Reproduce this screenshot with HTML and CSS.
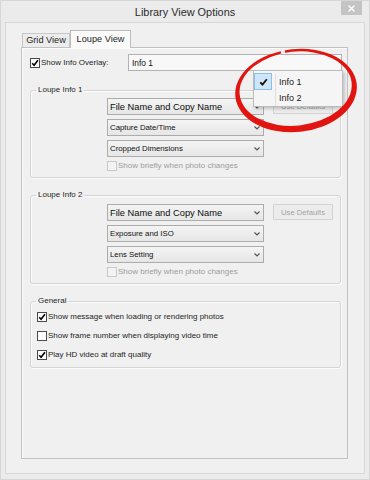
FILE: index.html
```html
<!DOCTYPE html>
<html>
<head>
<meta charset="utf-8">
<link rel="stylesheet" href="styles.css">
</head>
<body>
<div class="window">
  <div class="titlebar">
    <div class="title">Library View Options</div>
    <div class="close"><svg width="7" height="7" viewBox="0 0 7 7"><path d="M0.5 0.5L6.5 6.5M6.5 0.5L0.5 6.5" stroke="#fff" stroke-width="1.3"/></svg></div>
  </div>
  <div class="client">
    <div class="tabstrip">
      <div class="tab grid">Grid View</div>
      <div class="tab active">Loupe View</div>
    </div>
    <div class="panel">
      <div class="overlay-row">
        <div class="check"><span class="box on"><svg width="8" height="8" viewBox="0 0 8 8"><path d="M1.2 4.2L3.1 6.3L6.9 1.2" fill="none" stroke="#000" stroke-width="1.6"/></svg></span>Show Info Overlay:</div>
        <div class="select plain">Info 1</div>
      </div>

      <fieldset class="group g1">
        <legend>Loupe Info 1</legend>
        <div class="rows">
          <div class="select big"><span>File Name and Copy Name</span><svg class="arr" width="6" height="4" viewBox="0 0 6 4"><path d="M0.5 0.5L3 3L5.5 0.5" fill="none" stroke="#555" stroke-width="1.2"/></svg></div>
          <div class="btn">Use Defaults</div>
          <div class="select"><span>Capture Date/Time</span><svg class="arr" width="6" height="4" viewBox="0 0 6 4"><path d="M0.5 0.5L3 3L5.5 0.5" fill="none" stroke="#555" stroke-width="1.2"/></svg></div>
          <div class="select"><span>Cropped Dimensions</span><svg class="arr" width="6" height="4" viewBox="0 0 6 4"><path d="M0.5 0.5L3 3L5.5 0.5" fill="none" stroke="#555" stroke-width="1.2"/></svg></div>
          <div class="check off-row disabled"><span class="box dis"></span>Show briefly when photo changes</div>
        </div>
      </fieldset>

      <fieldset class="group g2">
        <legend>Loupe Info 2</legend>
        <div class="rows">
          <div class="select big"><span>File Name and Copy Name</span><svg class="arr" width="6" height="4" viewBox="0 0 6 4"><path d="M0.5 0.5L3 3L5.5 0.5" fill="none" stroke="#555" stroke-width="1.2"/></svg></div>
          <div class="btn">Use Defaults</div>
          <div class="select"><span>Exposure and ISO</span><svg class="arr" width="6" height="4" viewBox="0 0 6 4"><path d="M0.5 0.5L3 3L5.5 0.5" fill="none" stroke="#555" stroke-width="1.2"/></svg></div>
          <div class="select"><span>Lens Setting</span><svg class="arr" width="6" height="4" viewBox="0 0 6 4"><path d="M0.5 0.5L3 3L5.5 0.5" fill="none" stroke="#555" stroke-width="1.2"/></svg></div>
          <div class="check off-row disabled"><span class="box dis"></span>Show briefly when photo changes</div>
        </div>
      </fieldset>

      <fieldset class="group g3">
        <legend>General</legend>
        <div class="list">
          <div class="check"><span class="box on"><svg width="8" height="8" viewBox="0 0 8 8"><path d="M1.2 4.2L3.1 6.3L6.9 1.2" fill="none" stroke="#000" stroke-width="1.6"/></svg></span>Show message when loading or rendering photos</div>
          <div class="check"><span class="box"></span>Show frame number when displaying video time</div>
          <div class="check"><span class="box on"><svg width="8" height="8" viewBox="0 0 8 8"><path d="M1.2 4.2L3.1 6.3L6.9 1.2" fill="none" stroke="#000" stroke-width="1.6"/></svg></span>Play HD video at draft quality</div>
        </div>
      </fieldset>
    </div>
  </div>

  <div class="menu">
    <div class="mi"><span class="mcheck"><span class="hl"><svg width="9" height="8" viewBox="0 0 9 8"><path d="M1.3 4.3L3.5 6.6L7.8 1.2" fill="none" stroke="#111" stroke-width="1.8"/></svg></span></span><span class="mtext">Info 1</span></div>
    <div class="mi"><span class="mcheck"></span><span class="mtext">Info 2</span></div>
  </div>

  <svg class="annot" width="370" height="480" viewBox="0 0 370 480">
    <defs>
      <mask id="gap">
        <rect x="0" y="0" width="370" height="480" fill="#fff"/>
        <rect x="280.5" y="42" width="4" height="14" fill="#000" transform="rotate(-8 282 49)"/>
      </mask>
    </defs>
    <g mask="url(#gap)">
      <path transform="rotate(-6 296 90)" fill="#e2140f" fill-rule="evenodd"
        d="M235 90.5a61 41.5 0 1 0 122 0a61 41.5 0 1 0 -122 0Z M239.5 88.6a56.3 37 0 1 0 112.6 0a56.3 37 0 1 0 -112.6 0Z"/>
    </g>
  </svg>
</div>
</body>
</html>
```
FILE: styles.css
```css
* { box-sizing: border-box; }
html, body { margin: 0; padding: 0; }
body {
  width: 370px;
  height: 480px;
  overflow: hidden;
  font-family: "Liberation Sans", Arial, sans-serif;
  color: #1e1e1e;
  background: #ebebeb;
}
.window {
  position: relative;
  width: 370px;
  height: 480px;
  border: 1px solid #d6d6d6;
  background: #ebebeb;
  padding: 0 4px 5px;
  display: flex;
  flex-direction: column;
}
.titlebar {
  height: 21px;
  flex: none;
  display: grid;
  grid-template-columns: 1fr auto 1fr;
  align-items: start;
}
.title {
  grid-column: 2;
  font-size: 10.9px;
  line-height: 22px;
  color: #2b2b2b;
}
.close {
  grid-column: 3;
  justify-self: end;
  width: 21px;
  height: 14px;
  margin-right: 3px;
  background: #c4c4c4;
  display: flex;
  align-items: center;
  justify-content: center;
}
.client {
  flex: 1;
  border: 1px solid #d8d8d8;
  background: #f0f0f0;
  padding: 7px 16px 0 15px;
}
.tabstrip {
  display: flex;
  align-items: flex-end;
  height: 17px;
  padding-left: 1px;
}
.tab {
  font-size: 9.2px;
  text-align: center;
  color: #1e1e1e;
  border: 1px solid #c6c6c6;
  border-bottom: 0;
}
.tab.grid {
  width: 48px;
  height: 14px;
  line-height: 13px;
  background: #ececec;
}
.tab.active {
  width: 61px;
  height: 18px;
  line-height: 16px;
  margin-bottom: -1px;
  background: #fafafa;
  border-color: #bdbdbd;
  position: relative;
  z-index: 1;
}
.panel {
  height: 412px;
  border: 1px solid #c2c2c2;
  background: #f0f0f0;
  box-shadow: inset 1px 1px 0 #fbfbfb;
  padding: 6px 5px 0 8px;
}
.overlay-row {
  display: grid;
  grid-template-columns: 98px 1fr;
  align-items: center;
  height: 17px;
}
.check {
  display: flex;
  align-items: center;
  gap: 1px;
  font-size: 8px;
  line-height: 11px;
  height: 11px;
  white-space: nowrap;
  color: #1e1e1e;
}
.check.disabled { color: #9d9d9d; }
.box {
  width: 10px;
  height: 10px;
  flex: none;
  border: 1px solid #4a4a4a;
  background: #fdfdfd;
  display: flex;
  align-items: center;
  justify-content: center;
}
.box.dis {
  border-color: #c9c9c9;
  background: #f3f3f3;
}
.select {
  height: 17px;
  border: 1px solid #acacac;
  background: linear-gradient(#f4f4f4, #e6e6e6);
  display: flex;
  align-items: center;
  justify-content: space-between;
  padding: 0 3px 0 2px;
  font-size: 7.8px;
  color: #111;
  white-space: nowrap;
}
.rows > .select { grid-column: 1; }
.select.plain {
  background: #f8f8f8;
  border-color: #b2b2b2;
  font-size: 8.4px;
  padding-left: 3px;
}
.select.big {
  font-size: 9.3px;
  color: #0c0c0c;
}
.arr { flex: none; }
.group {
  margin: 14px 1px 0 0;
  padding: 0;
  min-width: 0;
  border: 1px solid #d4d4d4;
  border-radius: 3px;
  box-shadow: inset 1px 1px 0 #fbfbfb, 1px 1px 0 #fbfbfb;
}
.group.g2, .group.g3 { margin-top: 12px; }
legend {
  padding: 0 2px;
  margin-left: 5px;
  font-size: 8px;
  line-height: 10px;
  color: #1e1e1e;
}
.rows {
  display: grid;
  grid-template-columns: 157px 60px;
  column-gap: 9px;
  row-gap: 4px;
  padding: 3px 0 6px 76px;
}
.g2 .rows { padding-top: 4px; }
.off-row {
  grid-column: 1 / -1;
  margin-top: -1px;
}
.btn {
  grid-column: 2;
  grid-row: 1;
  height: 16px;
  align-self: start;
  border: 1px solid #d3d3d3;
  background: #ececec;
  color: #a3a3a3;
  font-size: 7.7px;
  display: flex;
  align-items: center;
  justify-content: center;
  white-space: nowrap;
}
.list {
  display: flex;
  flex-direction: column;
  gap: 8px;
  padding: 5px 0 7px 6px;
}
.menu {
  position: absolute;
  left: 252px;
  top: 69px;
  width: 90px;
  height: 37px;
  border: 1px solid #bcbcbc;
  background: #f5f5f5;
  box-shadow: 2px 2px 3px rgba(0, 0, 0, 0.18);
  padding-top: 3px;
  z-index: 5;
}
.mi {
  display: grid;
  grid-template-columns: 21px 1fr;
  height: 16px;
}
.mcheck {
  position: relative;
}
.hl {
  position: absolute;
  left: 0;
  top: -1px;
  width: 18px;
  height: 17px;
  background: #cfe6f8;
  border: 1px solid #8cc0e8;
  display: flex;
  align-items: center;
  justify-content: center;
}
.mtext {
  border-left: 1px solid #dedede;
  padding-left: 3px;
  font-size: 9px;
  line-height: 16px;
  color: #1a1a1a;
}
.annot {
  position: absolute;
  left: -1px;
  top: -1px;
  pointer-events: none;
  z-index: 10;
}
```
